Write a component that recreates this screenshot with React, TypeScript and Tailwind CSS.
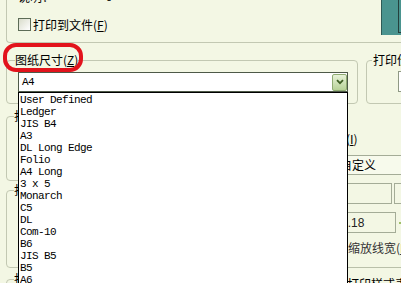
const paperSizes = [
  'User Defined',
  'Ledger',
  'JIS B4',
  'A3',
  'DL Long Edge',
  'Folio',
  'A4 Long',
  '3 x 5',
  'Monarch',
  'C5',
  'DL',
  'Com-10',
  'B6',
  'JIS B5',
  'B5',
  'A6',
  'A5',
  'Letter',
];

function CheckBox() {
  return <span className="block w-[13px] h-[13px] shrink-0 border border-[#5d6c57] bg-gradient-to-br from-[#d9dccb] to-white" />;
}

function DropButton() {
  return (
    <span className="flex items-center justify-center w-[15px] h-[17px] rounded-[2px] border border-[#8fab72] bg-gradient-to-b from-[#e8f3d8] to-[#b7d197]">
      <svg width="8" height="6" viewBox="0 0 8 6">
        <path d="M1 1.2 L4 4.2 L7 1.2" fill="none" stroke="#3f5f25" strokeWidth="1.8" />
      </svg>
    </span>
  );
}

export default function App() {
  return (
    <div className="relative w-[401px] h-[283px] overflow-hidden bg-[#f3f7e4] text-[12px] leading-[12px] text-black font-['Noto_Sans_CJK_SC',sans-serif]">
      {/* printer group, scrolled off the top */}
      <div className="ml-[6px] h-[43px] flex justify-between border-l border-b border-[#c2c8b2] rounded-bl-[4px]">
        <div className="pl-[11px]">
          <div className="-mt-[9px] flex h-[12px] whitespace-nowrap">
            <span className="w-[64px]">说明：</span>
            <span className="font-['Liberation_Mono',monospace] text-[10px]">DesignJet 750C C4708B</span>
          </div>
          <label className="mt-[15px] flex items-center gap-[2px] h-[13px] whitespace-nowrap">
            <CheckBox />
            <span>
              打印到文件(<u>F</u>)
            </span>
          </label>
        </div>
        <div className="w-[20px] h-[35px] flex justify-end border-l border-[#2f5b57] bg-[#4a948f]">
          <div className="w-[3px] h-[33px] border-l border-b border-[#24403d]" />
        </div>
      </div>

      {/* paper size + copies */}
      <div className="mt-[11px] flex">
        <fieldset className="ml-[6px] w-[352px] h-[50px] shrink-0 border border-[#c2c8b2] rounded-[4px]">
          <legend className="ml-[8px] leading-[12px]">
            图纸尺寸(<u>Z</u>)
          </legend>
          <div className="relative ml-[11px] mt-[6px] w-[330px] h-[20px] flex items-center border border-[#4e5a48] bg-white">
            <span className="flex-1 pl-[3px] font-['Liberation_Mono',monospace] text-[11px] tracking-[-0.6px]">A4</span>
            <DropButton />
            <ul className="absolute z-10 left-[-1px] top-[19px] w-[330px] h-[200px] border border-black bg-white pl-[1px] pt-[1px] font-['Liberation_Mono',monospace] text-[11px] tracking-[-0.6px] leading-[12px]">
              {paperSizes.map(s => (
                <li key={s} className="whitespace-pre">{s}</li>
              ))}
            </ul>
          </div>
        </fieldset>
        <fieldset className="ml-[8px] w-[80px] h-[50px] shrink-0 border border-[#c2c8b2] rounded-[4px]">
          <legend className="ml-[5px] px-[1px] leading-[12px] whitespace-nowrap">
            打印份数(<u>B</u>)
          </legend>
          <div className="ml-[31px] mt-[5px] w-[40px] h-[21px] border border-[#8f9984] bg-white" />
        </fieldset>
      </div>

      <div className="flex">
        {/* left column groups, mostly under the open list */}
        <div className="ml-[6px] w-[250px] shrink-0 flex flex-col">
          <fieldset className="mt-[6px] h-[71px] border border-[#c2c8b2] rounded-[4px]">
            <legend className="ml-[7px] leading-[12px]">打印区域</legend>
          </fieldset>
          <fieldset className="mt-[3px] h-[84px] border border-[#c2c8b2] rounded-[4px]">
            <legend className="ml-[7px] leading-[12px] whitespace-nowrap">打印偏移(原点设置在可打印区域)</legend>
          </fieldset>
          <fieldset className="mt-[5px] h-[30px] border border-[#c2c8b2] rounded-[4px]">
            <legend className="ml-[7px] leading-[12px]">打印选项</legend>
          </fieldset>
        </div>

        {/* plot scale column */}
        <div className="ml-[6px] w-[160px] shrink-0 flex flex-col pt-[29px]">
          <label className="ml-[20px] flex items-center gap-[3px] h-[12px] whitespace-nowrap">
            <CheckBox />
            <span>
              布满图纸(<u>I</u>)
            </span>
          </label>
          <div className="mt-[10px] ml-[74px] w-[120px] h-[20px] flex items-center border border-[#a4ac97] bg-[#f7faec] pl-[3px]">
            自定义
          </div>
          <div className="mt-[8px] flex">
            <div className="ml-[76px] w-[58px] h-[21px] border border-[#a4ac97]" />
            <div className="ml-[2px] w-[30px] h-[21px] border border-[#a4ac97]" />
          </div>
          <div className="mt-[8px] flex items-center">
            <div className="ml-[76px] w-[58px] h-[21px] flex items-center border border-[#a4ac97] pl-[2px] font-['Liberation_Sans',sans-serif] text-[12px] text-[#222]">
              2.18
            </div>
            <span className="ml-[3px] w-[4px] h-[2px] bg-[#9fbf6a]" />
          </div>
          <label className="mt-[9px] ml-[70px] flex items-center gap-[3px] h-[12px] whitespace-nowrap text-[#333]">
            <CheckBox />
            <span>
              缩放线宽(<u>L</u>)
            </span>
          </label>
          <div className="mt-[13px] h-px bg-[#b9c0a9]" />
          <div className="mt-[10px] ml-[85px] whitespace-nowrap">打印样式表</div>
        </div>
      </div>

      {/* red annotation ring */}
      <div className="absolute left-[3px] top-[43px] w-[80px] h-[29px] rounded-[13px] border-[4px] border-[#e2131c]" />
    </div>
  );
}
